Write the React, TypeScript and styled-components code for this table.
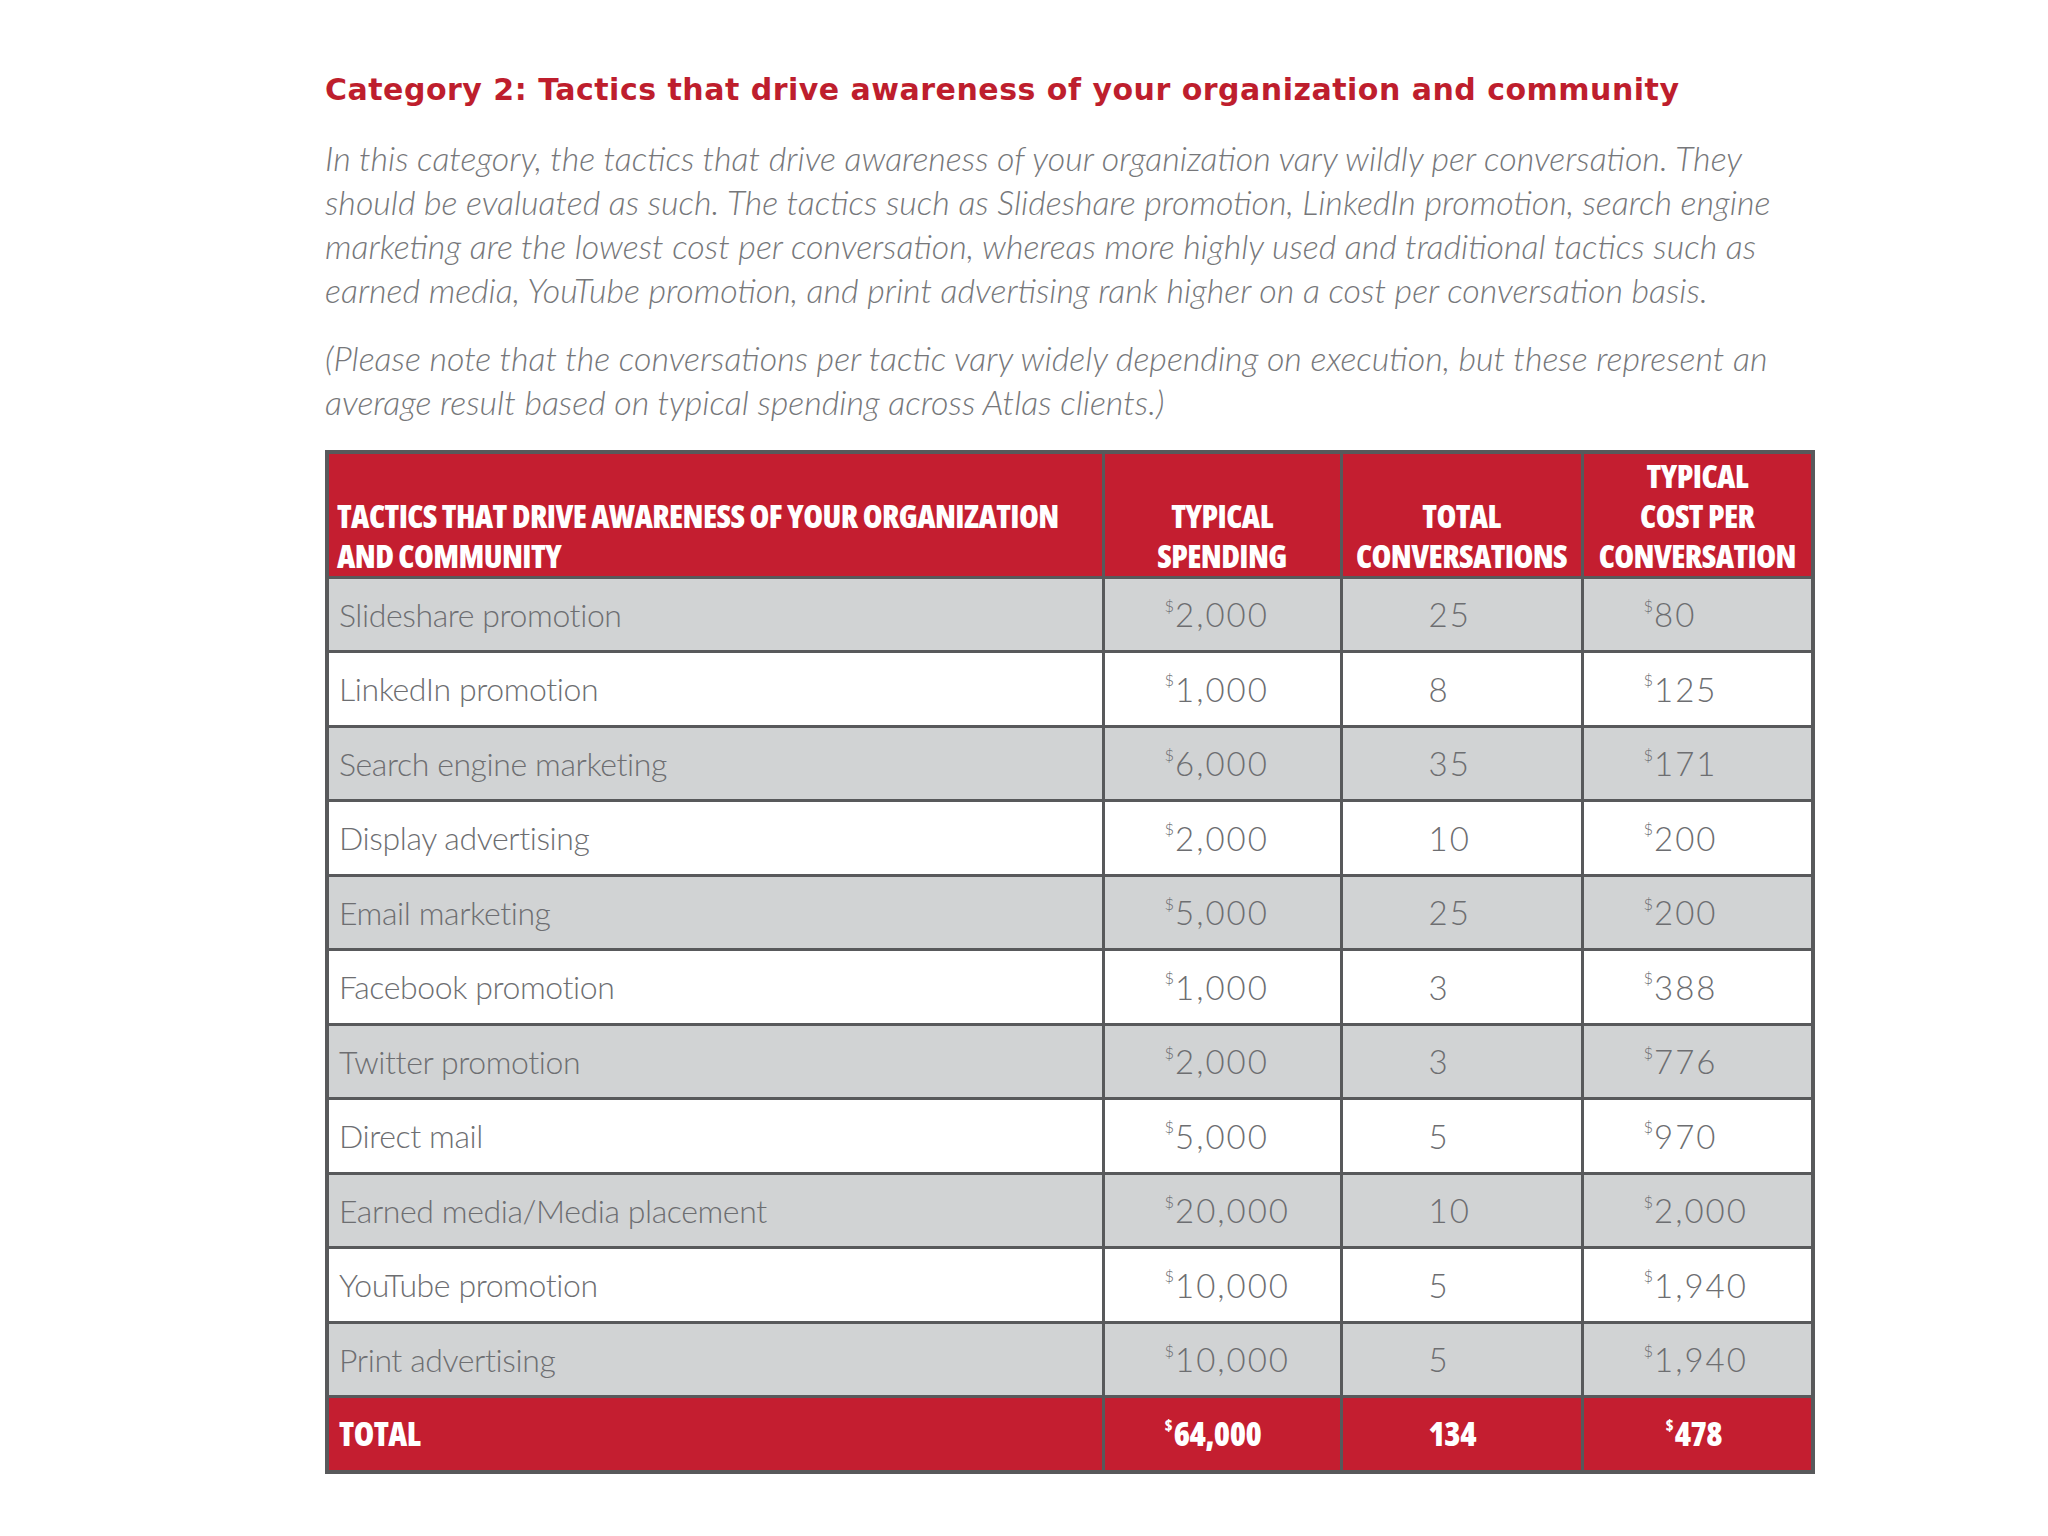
import React from "react";
import styled, { createGlobalStyle } from "styled-components";

const Global = createGlobalStyle`
  html, body { margin: 0; padding: 0; background: #ffffff; }
  body { font-family: "Lato", "Liberation Sans", sans-serif; }
`;

const Page = styled.main`
  width: 2048px;
  min-height: 1536px;
  box-sizing: border-box;
  padding: 70px 0 0 325px;
  background: #ffffff;
`;

const Title = styled.h1`
  margin: 0;
  font-family: "DejaVu Sans", "Liberation Sans", sans-serif;
  font-weight: 700;
  font-size: 30px;
  letter-spacing: 0.5px;
  color: #be1e2d;
  line-height: 40px;
`;

const Paragraph = styled.p<{ $top: number }>`
  margin: ${(p) => p.$top}px 0 0 0;
  font-family: "Lato", "Liberation Sans", sans-serif;
  font-weight: 300;
  font-style: italic;
  font-size: 34px;
  line-height: 44px;
  letter-spacing: 0px;
  color: #76777a;
`;

const Line = styled.span`
  display: block;
  white-space: nowrap;
`;

const Table = styled.table`
  margin-top: 26px;
  border-collapse: collapse;
  width: 1486px;
  table-layout: fixed;
  border: 4px solid #58595b;
`;

const condensed = `
  font-family: "Open Sans", "Liberation Sans", sans-serif;
  font-stretch: 75%;
  font-weight: 800;
`;

const HeadCell = styled.th<{ $align?: string }>`
  background: #c41e30;
  color: #ffffff;
  ${condensed}
  font-size: 32px;
  line-height: 40px;
  letter-spacing: -0.6px;
  text-transform: uppercase;
  text-align: ${(p) => p.$align || "center"};
  vertical-align: bottom;
  padding: 0 8px 0 8px;
  border: 3px solid #58595b;
  height: 125px;
  box-sizing: border-box;
  white-space: nowrap;
`;

const Row = styled.tr<{ $shade: boolean }>`
  background: ${(p) => (p.$shade ? "#d1d3d4" : "#ffffff")};
  height: 74.5px;
`;

const Cell = styled.td<{ $pad?: number; $num?: boolean }>`
  border: 3px solid #58595b;
  padding: 0 0 0 ${(p) => p.$pad ?? 10}px;
  font-family: "Lato", "Liberation Sans", sans-serif;
  font-weight: 300;
  font-size: ${(p) => (p.$num ? 33 : 32)}px;
  letter-spacing: ${(p) => (p.$num ? "2px" : "-0.4px")};
  color: #6d6e71;
  vertical-align: middle;
  white-space: nowrap;
`;

const TotalRow = styled.tr`
  background: #c41e30;
  height: 75px;
`;

const TotalCell = styled.td<{ $pad?: number }>`
  border: 3px solid #58595b;
  padding: 0 0 0 ${(p) => p.$pad ?? 10}px;
  ${condensed}
  font-size: 33px;
  letter-spacing: -0.5px;
  color: #ffffff;
  vertical-align: middle;
  white-space: nowrap;
`;

const Dollar = styled.sup`
  font-size: 0.5em;
  vertical-align: top;
  position: relative;
  top: 0.1em;
  margin-right: 1px;
  letter-spacing: 0;
`;

type Item = { name: string; spend: string; conv: string; cost: string };

const rows: Item[] = [
  { name: "Slideshare promotion", spend: "2,000", conv: "25", cost: "80" },
  { name: "LinkedIn promotion", spend: "1,000", conv: "8", cost: "125" },
  { name: "Search engine marketing", spend: "6,000", conv: "35", cost: "171" },
  { name: "Display advertising", spend: "2,000", conv: "10", cost: "200" },
  { name: "Email marketing", spend: "5,000", conv: "25", cost: "200" },
  { name: "Facebook promotion", spend: "1,000", conv: "3", cost: "388" },
  { name: "Twitter promotion", spend: "2,000", conv: "3", cost: "776" },
  { name: "Direct mail", spend: "5,000", conv: "5", cost: "970" },
  { name: "Earned media/Media placement", spend: "20,000", conv: "10", cost: "2,000" },
  { name: "YouTube promotion", spend: "10,000", conv: "5", cost: "1,940" },
  { name: "Print advertising", spend: "10,000", conv: "5", cost: "1,940" },
];

const Money = ({ v }: { v: string }) => (
  <>
    <Dollar>$</Dollar>
    {v}
  </>
);

export default function App() {
  return (
    <>
      <Global />
      <Page>
        <Title>Category 2: Tactics that drive awareness of your organization and community</Title>
        <Paragraph $top={26}>
          <Line>In this category, the tactics that drive awareness of your organization vary wildly per conversation. They</Line>
          <Line>should be evaluated as such. The tactics such as Slideshare promotion, LinkedIn promotion, search engine</Line>
          <Line>marketing are the lowest cost per conversation, whereas more highly used and traditional tactics such as</Line>
          <Line>earned media, YouTube promotion, and print advertising rank higher on a cost per conversation basis.</Line>
        </Paragraph>
        <Paragraph $top={24}>
          <Line>(Please note that the conversations per tactic vary widely depending on execution, but these represent an</Line>
          <Line>average result based on typical spending across Atlas clients.)</Line>
        </Paragraph>
        <Table>
          <colgroup>
            <col style={{ width: 776 }} />
            <col style={{ width: 238 }} />
            <col style={{ width: 241 }} />
            <col style={{ width: 231 }} />
          </colgroup>
          <thead>
            <tr>
              <HeadCell $align="left">
                Tactics that drive awareness of your organization
                <br />
                and community
              </HeadCell>
              <HeadCell>
                Typical
                <br />
                spending
              </HeadCell>
              <HeadCell>
                Total
                <br />
                conversations
              </HeadCell>
              <HeadCell>
                Typical
                <br />
                cost per
                <br />
                conversation
              </HeadCell>
            </tr>
          </thead>
          <tbody>
            {rows.map((r, i) => (
              <Row key={r.name} $shade={i % 2 === 0}>
                <Cell>{r.name}</Cell>
                <Cell $pad={60} $num>
                  <Money v={r.spend} />
                </Cell>
                <Cell $pad={86} $num>
                  {r.conv}
                </Cell>
                <Cell $pad={60} $num>
                  <Money v={r.cost} />
                </Cell>
              </Row>
            ))}
            <TotalRow>
              <TotalCell>TOTAL</TotalCell>
              <TotalCell $pad={60}>
                <Money v="64,000" />
              </TotalCell>
              <TotalCell $pad={86}>134</TotalCell>
              <TotalCell $pad={82}>
                <Money v="478" />
              </TotalCell>
            </TotalRow>
          </tbody>
        </Table>
      </Page>
    </>
  );
}
